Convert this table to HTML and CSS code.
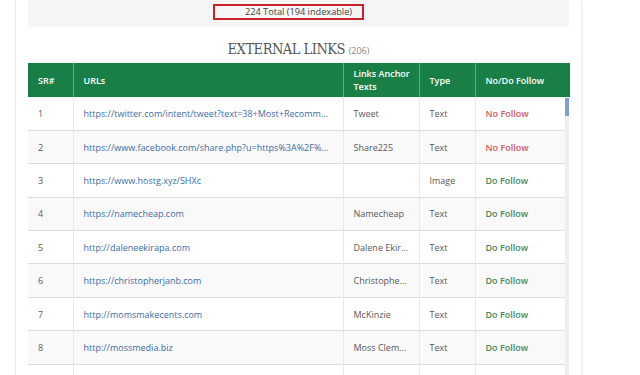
FILE: index.html
```html
<!DOCTYPE html>
<html lang="en">
<head>
  <meta charset="UTF-8" />
  <meta name="viewport" content="width=device-width, initial-scale=1.0"/>
  <title>External Links - SEO Report</title>
  <link rel="stylesheet" href="styles.css">
</head>
<body>

  <div class="report-card">

    <div class="stats-box">
      <span class="stats-total">224 Total (194 indexable)</span>
    </div>

    <h2 class="section-title">EXTERNAL LINKS <small>(206)</small></h2>

    <table class="links-table links-head">
      <colgroup>
        <col class="col-sr"><col class="col-url"><col class="col-anchor"><col class="col-type"><col>
      </colgroup>
      <tr>
        <th>SR#</th>
        <th>URLs</th>
        <th>Links Anchor Texts</th>
        <th>Type</th>
        <th>No/Do Follow</th>
      </tr>
    </table>

    <div class="table-scroll">
      <table class="links-table links-body">
        <colgroup>
          <col class="col-sr"><col class="col-url"><col class="col-anchor"><col class="col-type"><col>
        </colgroup>
        <tr>
          <td>1</td>
          <td class="url">https://twitter.com/intent/tweet?text=38+Most+Recomm...</td>
          <td>Tweet</td>
          <td>Text</td>
          <td class="no-follow">No Follow</td>
        </tr>
        <tr>
          <td>2</td>
          <td class="url">https://www.facebook.com/share.php?u=https%3A%2F%...</td>
          <td>Share225</td>
          <td>Text</td>
          <td class="no-follow">No Follow</td>
        </tr>
        <tr>
          <td>3</td>
          <td class="url">https://www.hostg.xyz/SHXc</td>
          <td></td>
          <td>Image</td>
          <td class="do-follow">Do Follow</td>
        </tr>
        <tr>
          <td>4</td>
          <td class="url">https://namecheap.com</td>
          <td>Namecheap</td>
          <td>Text</td>
          <td class="do-follow">Do Follow</td>
        </tr>
        <tr>
          <td>5</td>
          <td class="url">http://daleneekirapa.com</td>
          <td>Dalene Ekir...</td>
          <td>Text</td>
          <td class="do-follow">Do Follow</td>
        </tr>
        <tr>
          <td>6</td>
          <td class="url">https://christopherjanb.com</td>
          <td>Christophe...</td>
          <td>Text</td>
          <td class="do-follow">Do Follow</td>
        </tr>
        <tr>
          <td>7</td>
          <td class="url">http://momsmakecents.com</td>
          <td>McKinzie</td>
          <td>Text</td>
          <td class="do-follow">Do Follow</td>
        </tr>
        <tr>
          <td>8</td>
          <td class="url">http://mossmedia.biz</td>
          <td>Moss Clem...</td>
          <td>Text</td>
          <td class="do-follow">Do Follow</td>
        </tr>
        <tr>
          <td></td>
          <td class="url"></td>
          <td></td>
          <td></td>
          <td></td>
        </tr>
      </table>
      <div class="scroll-track">
        <div class="scroll-thumb"></div>
      </div>
    </div>

  </div>

</body>
</html>
```

FILE: styles.css
```css
body {
  margin: 0;
  padding: 0;
  font-family: "Open Sans", "Liberation Sans", sans-serif;
  background-color: #fff;
  overflow: hidden;
}

.report-card {
  width: 541px;
  margin-left: 15px;
  padding: 0 12px 0 12px;
  background-color: #fff;
  border-left: 1px solid #ececec;
  border-right: 1px solid #ececec;
  box-shadow: 0 0 4px rgba(0,0,0,0.06);
}

.stats-box {
  display: flex;
  justify-content: center;
  align-items: flex-start;
  background-color: #f5f5f5;
  height: 27px;
  padding-top: 4px;
  box-sizing: border-box;
}

.stats-total {
  font-size: 9.2px;
  line-height: 12px;
  color: #444;
  padding: 0 10px 0 30px;
  margin-right: 20px;
  border: 2px solid #c9232d;
}

.section-title {
  margin: 0;
  padding: 14px 0 4px;
  text-align: center;
  font-family: "DejaVu Serif Condensed", "DejaVu Serif", serif;
  font-weight: normal;
  font-size: 14.5px;
  line-height: 17px;
  letter-spacing: -0.5px;
  color: #555;
}

.section-title small {
  font-family: "Open Sans", "Liberation Sans", sans-serif;
  font-size: 9px;
  letter-spacing: 0;
  color: #888;
}

.links-table {
  border-collapse: collapse;
  table-layout: fixed;
  font-size: 9px;
}

.col-sr { width: 45px; }
.col-url { width: 270px; }
.col-anchor { width: 76px; }
.col-type { width: 56px; }

.links-head {
  width: 542px;
  background-color: #1a7f46;
}

.links-head th {
  height: 34px;
  padding: 0 3px 0 10px;
  box-sizing: border-box;
  text-align: left;
  color: #fff;
  font-weight: 600;
  line-height: 13px;
  border-left: 1px solid rgba(255,255,255,0.35);
}

.links-head th:first-child {
  border-left: none;
}

.table-scroll {
  display: flex;
  align-items: flex-start;
}

.links-body {
  width: 538px;
}

.links-body tr {
  height: 33.4px;
  border-bottom: 1px solid #dcdcdc;
}

.links-body tr:nth-child(even) {
  background-color: #f9f9f9;
}

.links-body td {
  padding: 0 10px;
  color: #5a5a5a;
  white-space: nowrap;
  overflow: hidden;
  border-left: 1px solid #e8e8e8;
}

.links-body td:first-child {
  border-left: none;
}

.links-body td.url {
  color: #3b6ea6;
}

.links-body td.no-follow {
  color: #d05c62;
  font-weight: 600;
}

.links-body td.do-follow {
  color: #47875a;
  font-weight: 600;
}

.scroll-track {
  width: 4px;
  height: 300px;
  background-color: #eeeeee;
}

.scroll-thumb {
  height: 18px;
  margin-top: 1px;
  background-color: #7fa1d0;
}
```
